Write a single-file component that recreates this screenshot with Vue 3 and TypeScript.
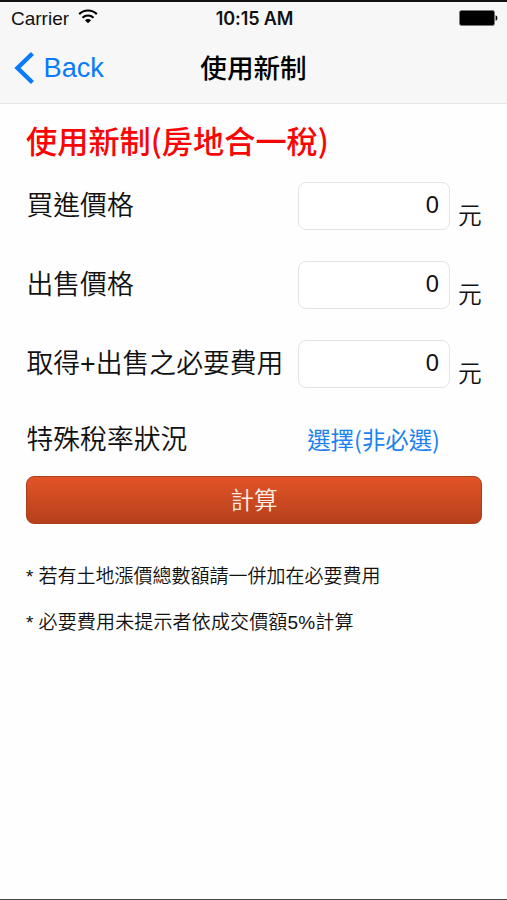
<script setup lang="ts">
import { ref } from 'vue'

interface Field {
  id: string
  label: string
  value: string
}

const fields = ref<Field[]>([
  { id: 'buy', label: '買進價格', value: '0' },
  { id: 'sell', label: '出售價格', value: '0' },
  { id: 'cost', label: '取得+出售之必要費用', value: '0' },
])

const notes: string[] = [
  '若有土地漲價總數額請一併加在必要費用',
  '必要費用未提示者依成交價額5%計算',
]
</script>

<template>
  <div class="screen">
    <header class="top">
      <div class="status">
        <div class="carrier">
          <span>Carrier</span>
          <svg class="wifi" viewBox="0 0 20 15" width="20" height="15">
            <path d="M1.2 5.1a12.6 12.6 0 0 1 17.6 0" fill="none" stroke="#000" stroke-width="2.2" />
            <path d="M4.5 8.7a8 8 0 0 1 11 0" fill="none" stroke="#000" stroke-width="2.2" />
            <path d="M10 14.3 6.9 11.2a4.4 4.4 0 0 1 6.2 0z" fill="#000" />
          </svg>
        </div>
        <span class="clock">10:15 AM</span>
        <svg class="battery" viewBox="0 0 39 16" width="39" height="16">
          <rect x="0.5" y="0.5" width="35" height="15" rx="2" fill="#000" stroke="#777" />
          <path d="M36.6 5.2c2.4.7 2.4 4.9 0 5.6z" fill="#000" />
        </svg>
      </div>
      <nav class="nav">
        <a class="back">
          <svg viewBox="0 0 20 34" width="20" height="34">
            <path d="M18.5 2.500 3.500 17l15 14.500" fill="none" stroke="#077bfb" stroke-width="4.400" />
          </svg>
          <span>Back</span>
        </a>
        <h1 class="title">使用新制</h1>
      </nav>
    </header>

    <main class="content">
      <h2 class="heading">使用新制(房地合一稅)</h2>
      <div v-for="f in fields" :key="f.id" class="row">
        <label class="label" :for="f.id">{{ f.label }}</label>
        <input :id="f.id" v-model="f.value" class="input" type="text" inputmode="numeric" />
        <span class="unit">元</span>
      </div>
      <div class="row option">
        <span class="label">特殊稅率狀況</span>
        <a class="choose">選擇(非必選)</a>
      </div>
      <button class="submit" type="button">計算</button>
      <p v-for="n in notes" :key="n" class="note"><span class="star">*</span>{{ n }}</p>
    </main>
  </div>
</template>

<style>
body {
  background: #fff;
}
</style>

<style scoped>
.screen {
  box-sizing: border-box;
  display: flex;
  flex-direction: column;
  width: 507px;
  height: 900px;
  border-top: 2px solid #111;
  border-bottom: 1px solid #444;
  background: #fefefe;
  color: #111;
  font-family: "Liberation Sans", "Noto Sans CJK TC", sans-serif;
  overflow: hidden;
}
.top {
  box-sizing: border-box;
  height: 102px;
  background: #f7f7f7;
  border-bottom: 1px solid #e6e6e6;
}
.status {
  display: grid;
  grid-template-columns: 1fr auto 1fr;
  align-items: center;
  height: 32px;
  padding: 0 9px 0 11px;
  font-size: 19px;
}
.carrier {
  display: flex;
  align-items: center;
  gap: 9px;
  padding-top: 1px;
}
.wifi {
  margin-top: -4px;
}
.clock {
  font-family: Inter, sans-serif;
  font-size: 18px;
  font-weight: 600;
  letter-spacing: -0.1px;
}
.battery {
  justify-self: end;
}
.nav {
  display: grid;
  grid-template-columns: 1fr auto 1fr;
  align-items: center;
  height: 68px;
  padding: 0 14px;
}
.back {
  display: flex;
  align-items: center;
  gap: 9.5px;
  color: #077bfb;
  font-size: 27.2px;
}
.title {
  margin: -3px 0 0;
  color: #000;
  font-family: "Noto Sans CJK TC", sans-serif;
  font-size: 26.6px;
  line-height: 40px;
  font-weight: 500;
}
.content {
  display: flex;
  flex-direction: column;
  padding: 14px 25px 0 26px;
}
.heading {
  margin: 0;
  height: 45px;
  line-height: 43px;
  color: #fa0505;
  font-family: "Noto Sans CJK TC", sans-serif;
  font-size: 31.2px;
  font-weight: 500;
  white-space: nowrap;
}
.row {
  display: flex;
  align-items: center;
  height: 47px;
  margin-top: 32px;
}
.heading + .row {
  margin-top: 19px;
}
.label {
  flex: 1;
  padding: 1px 0 0 0.5px;
  font-size: 26.8px;
  font-weight: 350;
  line-height: 40px;
  white-space: nowrap;
}
.input {
  box-sizing: border-box;
  width: 152px;
  height: 48px;
  padding: 0 10px 0 10px;
  border: 1px solid #e4e4e4;
  border-radius: 8px;
  background: #fff;
  color: #111;
  font-family: inherit;
  font-size: 23.7px;
  text-align: right;
  outline: none;
}
.unit {
  width: 24px;
  margin: 20px 0 0 8px;
  font-size: 23.7px;
  font-weight: 350;
  line-height: 34px;
}
.row.option {
  margin-top: 29px;
}
.choose {
  padding: 0 42px 1px 0;
  color: #1c82ef;
  font-family: "Noto Sans CJK TC", sans-serif;
  font-size: 23.4px;
  font-weight: 400;
  line-height: 36px;
}
.submit {
  height: 48px;
  margin-top: 13px;
  padding: 0 0 2px;
  border: 1px solid #a9401c;
  border-radius: 8px;
  background: linear-gradient(#e35427, #b5401b);
  color: #fbeee9;
  font-family: inherit;
  font-size: 23.5px;
  font-weight: 350;
}
.note {
  margin: 0;
  height: 46px;
  line-height: 46px;
  font-size: 19px;
  font-weight: 350;
  white-space: nowrap;
}
.note:last-child {
  letter-spacing: 0.15px;
}
.submit + .note {
  margin-top: 30px;
}
.star {
  margin-right: 5px;
}
</style>
